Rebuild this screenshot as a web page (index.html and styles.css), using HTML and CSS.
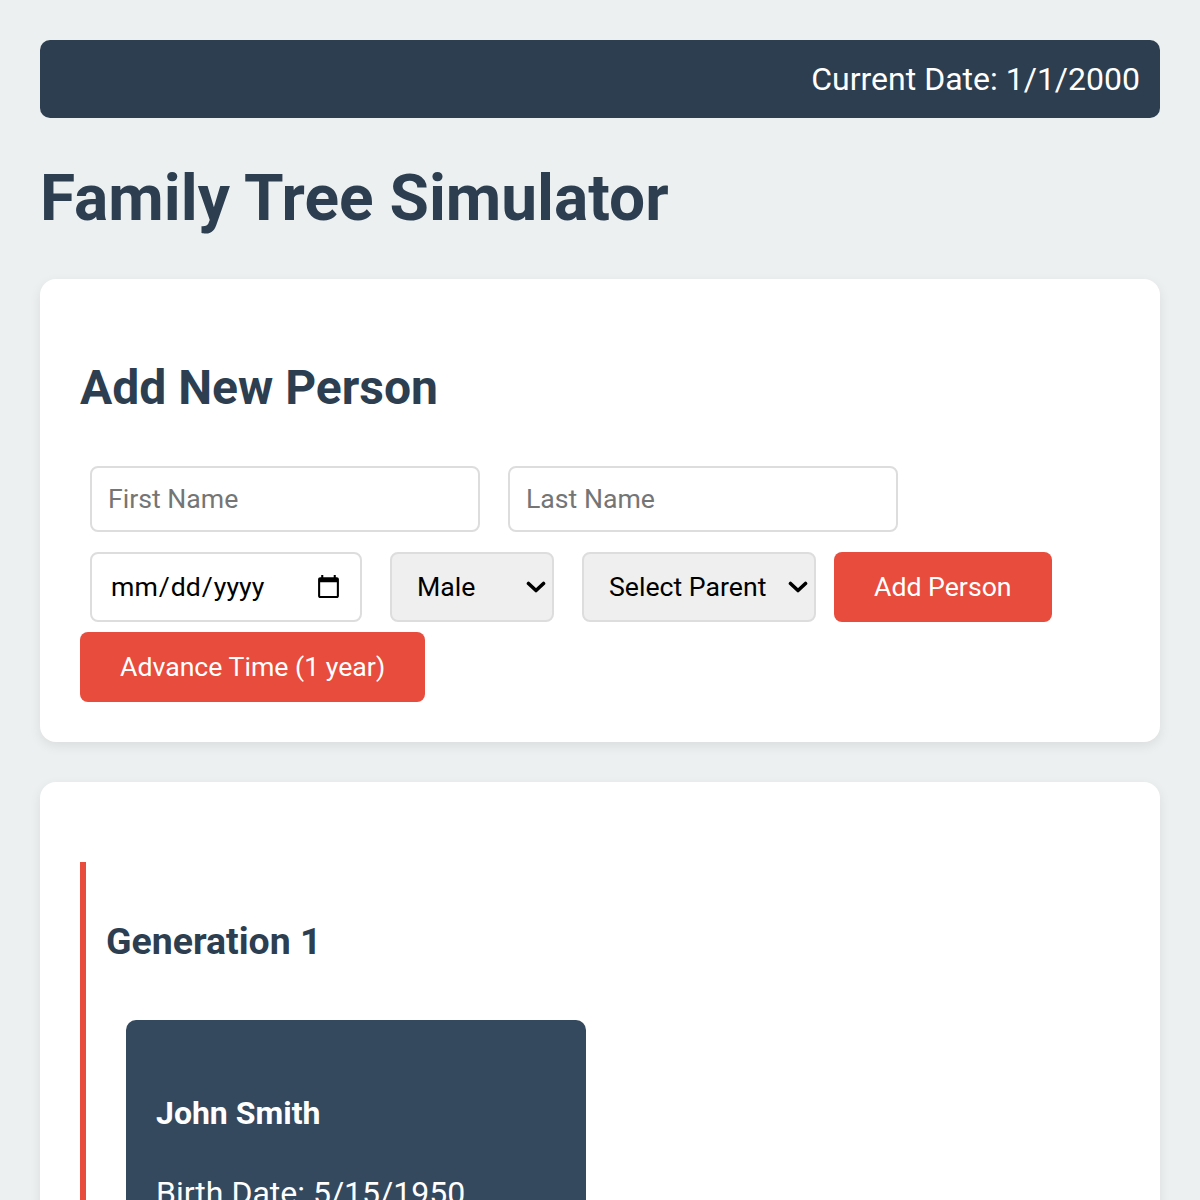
FILE: index.html
```html
<!DOCTYPE html>
<html lang="en">
<head>
  <meta charset="UTF-8" />
  <meta name="viewport" content="width=device-width, initial-scale=1.0"/>
  <title>Family Tree Simulator</title>
  <link rel="stylesheet" href="styles.css">
</head>
<body>
  <div class="header">
    <div id="currentDate">Current Date: 1/1/2000</div>
  </div>

  <h1>Family Tree Simulator</h1>

  <div class="card">
    <h2>Add New Person</h2>
    <div class="person-form">
      <input type="text" id="firstName" class="name-input" placeholder="First Name">
      <input type="text" id="lastName" class="name-input" placeholder="Last Name">
      <input type="date" id="birthDate" class="date-input">
      <select id="gender" class="gender-select">
        <option value="male">Male</option>
        <option value="female">Female</option>
      </select>
      <select id="parentSelect" class="parent-select">
        <option value="">Select Parent</option>
        <option value="1">John Smith</option>
      </select>
      <button onclick="addPerson()">Add Person</button>
      <button onclick="advanceTime()">Advance Time (1 year)</button>
    </div>
  </div>

  <div class="card">
    <div id="familyTree">
      <div class="generation">
        <h3>Generation 1</h3>
        <div class="generation-row">
          <div class="person">
            <h4>John Smith</h4>
            <p>Birth Date: 5/15/1950</p>
            <p>Age: 49</p>
            <p>Gender: Male</p>
          </div>
        </div>
      </div>
    </div>
  </div>

  <script>
    let currentDate = new Date(2000, 0, 1);

    function showDate() {
      document.getElementById("currentDate").innerText =
        "Current Date: " + currentDate.toLocaleDateString("en-US");
    }

    function advanceTime() {
      currentDate.setFullYear(currentDate.getFullYear() + 1);
      showDate();
    }

    function addPerson() {
      // form handling lives here once the tree is stored
    }
  </script>
</body>
</html>
```

FILE: styles.css
```css
body {
  margin: 0;
  padding: 40px;
  font-family: Roboto, 'Liberation Sans', sans-serif;
  font-size: 32px;
  background-color: #ecf0f1;
  color: #2c3e50;
}

.header {
  background-color: #2c3e50;
  color: white;
  padding: 20px;
  border-radius: 10px;
  text-align: right;
}

h1 {
  font-size: 64px;
  margin: 43px 0;
}

.card {
  background: white;
  border-radius: 16px;
  padding: 40px;
  margin-bottom: 40px;
  box-shadow: 0 4px 12px rgba(0, 0, 0, 0.08);
}

h2 {
  font-size: 48px;
  margin: 40px 0;
}

.person-form {
  display: flex;
  flex-wrap: wrap;
  align-items: center;
  column-gap: 8px;
}

input,
select {
  box-sizing: border-box;
  margin: 10px;
  padding: 16px;
  font-family: inherit;
  font-size: 26.67px;
  border: 2px solid #ddd;
  border-radius: 8px;
  color: black;
}

input::placeholder {
  color: #757575;
}

.name-input {
  width: 390px;
  height: 66px;
}

.date-input {
  width: 272px;
  height: 70px;
  padding-left: 18px;
}

/* custom chevron so the arrow stays bold at this size */
select {
  appearance: none;
  height: 70px;
  padding-left: 25px;
  background-color: #efefef;
  background-image: url("data:image/svg+xml,%3Csvg xmlns='http://www.w3.org/2000/svg' viewBox='0 0 20 12'%3E%3Cpath d='M2.5 2.5l7.5 7 7.5-7' fill='none' stroke='black' stroke-width='3.6' stroke-linecap='round' stroke-linejoin='round'/%3E%3C/svg%3E");
  background-repeat: no-repeat;
  background-position: right 6px center;
  background-size: 20px 12px;
}

.gender-select {
  width: 164px;
}

.parent-select {
  width: 234px;
}

button {
  height: 70px;
  padding: 0 40px;
  font-family: inherit;
  font-size: 26.67px;
  border: none;
  border-radius: 8px;
  background-color: #e74c3c;
  color: white;
  cursor: pointer;
}

button:hover {
  background-color: #c0392b;
}

.generation {
  margin: 40px 0;
  padding: 20px;
  border-left: 6px solid #e74c3c;
}

h3 {
  font-size: 37.44px;
  margin: 37.44px 0;
}

.generation-row {
  display: flex;
  flex-wrap: wrap;
}

.person {
  width: 460px;
  box-sizing: border-box;
  margin: 19px 20px 20px;
  padding: 30px;
  background-color: #34495e;
  color: white;
  border-radius: 10px;
}

h4 {
  font-size: 32px;
  margin: 44px 0 42px;
}

.person p {
  margin: 32px 0;
}
```
